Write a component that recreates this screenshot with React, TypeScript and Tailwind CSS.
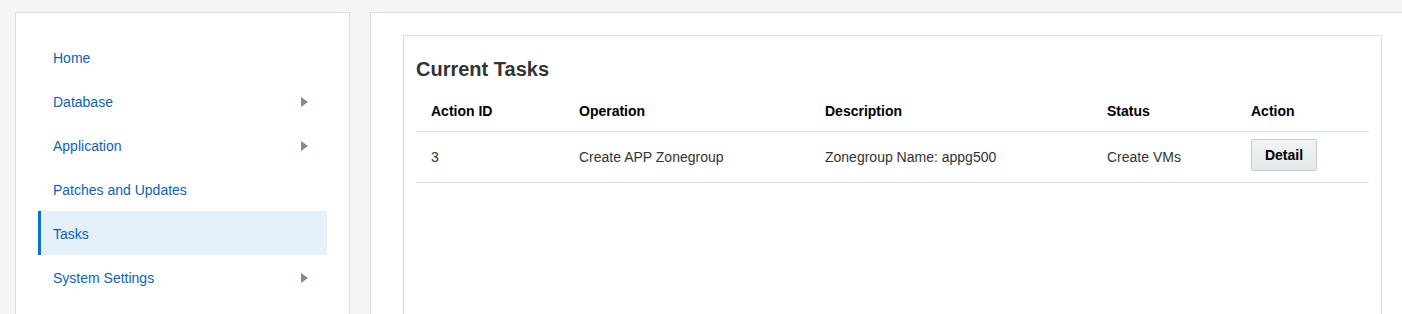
import React from "react";

type NavItem = { label: string; hasChildren?: boolean; active?: boolean };

const navItems: NavItem[] = [
  { label: "Home" },
  { label: "Database", hasChildren: true },
  { label: "Application", hasChildren: true },
  { label: "Patches and Updates" },
  { label: "Tasks", active: true },
  { label: "System Settings", hasChildren: true },
];

type Task = { id: string; operation: string; description: string; status: string };

const tasks: Task[] = [
  { id: "3", operation: "Create APP Zonegroup", description: "Zonegroup Name: appg500", status: "Create VMs" },
];

const cols = ["w-[148px]", "w-[246px]", "w-[282px]", "w-[144px]", "w-[133px]"];

// small right-pointing caret for expandable nav entries
const Caret = () => (
  <svg width="7" height="10" viewBox="0 0 7 10" className="mr-[19px]">
    <path d="M0 0 L7 5 L0 10 Z" fill="#7f8c99" />
  </svg>
);

function Sidebar() {
  return (
    <div className="w-[335px] h-[400px] shrink-0 bg-white border border-[#d6dfe6] pt-[22px] px-[22px]">
      <ul>
        {navItems.map((item) => (
          <li
            key={item.label}
            className={`h-[44px] flex items-center justify-between pt-[2px] ${
              item.active ? "bg-[#e4f0fa] border-l-[3px] border-[#0572ce] pl-[12px]" : "pl-[15px]"
            }`}
          >
            <span className="text-[14px] text-[#0b62b8]">{item.label}</span>
            {item.hasChildren && <Caret />}
          </li>
        ))}
      </ul>
    </div>
  );
}

function TasksTable() {
  const headers = ["Action ID", "Operation", "Description", "Status", "Action"];
  return (
    <table className="w-full border-collapse table-fixed mt-[8px]">
      <thead>
        <tr className="h-[40px] border-b border-[#d6dfe6]">
          {headers.map((h, i) => (
            <th key={h} className={`${cols[i]} text-left font-bold text-[14px] text-black px-[15px] pt-[2px]`}>
              {h}
            </th>
          ))}
        </tr>
      </thead>
      <tbody>
        {tasks.map((t) => (
          <tr key={t.id} className="h-[51px] border-b border-[#d6dfe6] text-[14px] text-[#333333]">
            <td className="px-[15px] pt-[1px]">{t.id}</td>
            <td className="px-[15px] pt-[1px]">{t.operation}</td>
            <td className="px-[15px] pt-[1px]">{t.description}</td>
            <td className="px-[15px] pt-[1px]">{t.status}</td>
            <td className="px-[15px]">
              <button className="h-[32px] w-[66px] -mt-[4px] pt-[1px] rounded-[2px] border border-[#c4ced7] bg-gradient-to-b from-[#f1f3f3] to-[#e4e8ea] text-[14px] font-bold text-black">
                Detail
              </button>
            </td>
          </tr>
        ))}
      </tbody>
    </table>
  );
}

export default function App() {
  return (
    <div
      className="h-[314px] w-[1402px] overflow-hidden bg-[#f4f5f6] flex gap-[20px] pl-[15px] pt-[12px]"
      style={{ fontFamily: '"Liberation Sans", Arial, sans-serif' }}
    >
      <Sidebar />
      <div className="w-[1100px] h-[400px] shrink-0 bg-white border border-[#d6dfe6] pl-[32px] pt-[22px]">
        <div className="w-[979px] h-[400px] border border-[#d6dfe6] px-[12px] pt-[19px]">
          <h2 className="text-[20px] leading-[28px] font-bold text-[#333333]">Current Tasks</h2>
          <TasksTable />
        </div>
      </div>
    </div>
  );
}
